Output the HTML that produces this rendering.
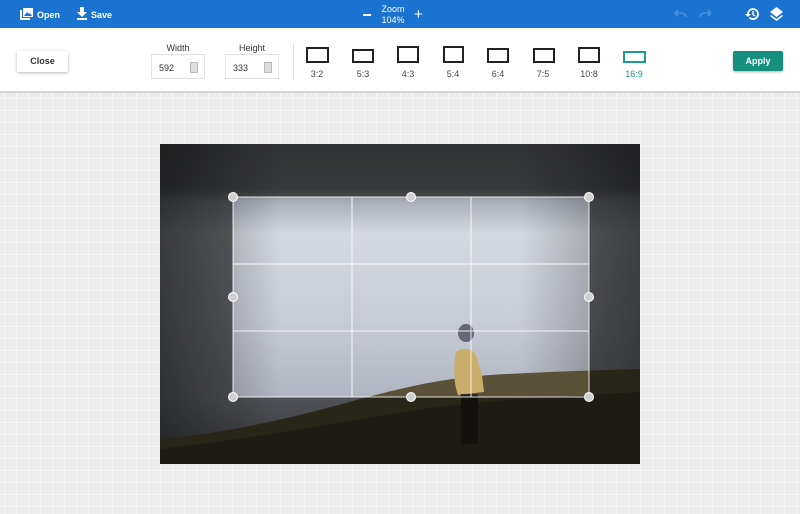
<!DOCTYPE html>
<html><head><meta charset="utf-8"><style>
*{margin:0;padding:0;box-sizing:border-box}
body{width:800px;height:514px;overflow:hidden;font-family:"Liberation Sans",sans-serif;position:relative;
background-color:#ececec;
background-image:linear-gradient(#f6f6f6 1px,transparent 1px),linear-gradient(90deg,#f6f6f6 1px,transparent 1px);
background-size:12px 12px;background-position:4px 2px}
.hdr{position:absolute;left:0;top:0;width:800px;height:28px;background:#1a73d0;color:#fff;font-size:9px;font-weight:bold}
.tb{position:absolute;left:0;top:28px;width:800px;height:65px;background:#fff;border-bottom:2px solid #d4d4d4}
.abs{position:absolute}
.btn{position:absolute;font-size:9px;font-weight:bold;text-align:center;border-radius:2px}
.lbl{font-size:9px;color:#333;text-align:center}
.inp{position:absolute;width:54px;height:25px;border:1px solid #e2e2e2;font-size:9px;color:#333;padding:8px 0 0 7px}
.spin{position:absolute;right:6px;top:7px;width:8px;height:11px;background:#ddd;border:1px solid #bbb}
.r{position:absolute;border:2px solid #222}
.rl{position:absolute;font-size:9px;color:#444;width:40px;text-align:center;top:41px}
</style></head><body>
<div class="hdr">
 <svg class="abs" style="left:20px;top:8px" width="13" height="12" viewBox="0 0 13 12"><rect x="0" y="2" width="2" height="10" fill="#fff"/><rect x="0" y="10" width="10" height="2" fill="#fff"/><rect x="3" y="0" width="10" height="9" fill="#fff"/><path d="M4 8l3-4 2 2 1-1 2 3z" fill="#1a73d0"/></svg>
 <div class="abs" style="left:37px;top:10px">Open</div>
 <svg class="abs" style="left:77px;top:7px" width="10" height="13" viewBox="0 0 10 13"><path d="M3 0h4v5h3L5 10 0 5h3z M0 11h10v2H0z" fill="#fff"/></svg>
 <div class="abs" style="left:91px;top:10px">Save</div>
 <div class="abs" style="left:363px;top:14px;width:8px;height:1.5px;background:#fff"></div>
 <div class="abs" style="left:375px;top:4px;width:36px;text-align:center;font-weight:normal;line-height:11px">Zoom<br>104%</div>
 <div class="abs" style="left:414px;top:9px;font-size:15px;font-weight:normal;line-height:12px">+</div>
 <svg class="abs" style="left:673px;top:9px" width="40" height="10" viewBox="0 0 40 10"><path d="M2 4l3-3M2 4l3 3M2 4h6c3 0 5 2 5 4" stroke="#4b8fdc" stroke-width="1.6" fill="none"/><path d="M38 4l-3-3M38 4l-3 3M38 4h-6c-3 0-5 2-5 4" stroke="#4b8fdc" stroke-width="1.6" fill="none"/></svg>
 <svg class="abs" style="left:745px;top:7px" width="14" height="14" viewBox="0 0 14 14"><path d="M3 7a5 5 0 1 1 1.5 3.6" stroke="#fff" stroke-width="1.8" fill="none"/><path d="M0 7h6L3 10z" fill="#fff"/><path d="M8 4v3.5l2 1.5" stroke="#fff" stroke-width="1.4" fill="none"/></svg>
 <svg class="abs" style="left:770px;top:7px" width="13" height="14" viewBox="0 0 13 14"><path d="M6.5 0L13 5 6.5 10 0 5z" fill="#fff"/><path d="M1 8l5.5 4L12 8l1 1-6.5 5L0 9z" fill="#fff"/></svg>
</div>
<div class="tb">
 <div class="btn" style="left:17px;top:23px;width:51px;height:21px;line-height:21px;color:#333;background:#fff;box-shadow:0 1px 3px rgba(0,0,0,.3)">Close</div>
 <div class="abs lbl" style="left:151px;top:15px;width:54px">Width</div>
 <div class="inp" style="left:151px;top:26px">592<div class="spin"></div></div>
 <div class="abs lbl" style="left:225px;top:15px;width:54px">Height</div>
 <div class="inp" style="left:225px;top:26px">333<div class="spin"></div></div>
 <div class="abs" style="left:293px;top:15px;width:1px;height:37px;background:#e2e2e2"></div>
 <div class="r" style="left:306px;top:19px;width:23px;height:16px"></div><div class="rl" style="left:297px">3:2</div>
 <div class="r" style="left:352px;top:21px;width:22px;height:14px"></div><div class="rl" style="left:343px">5:3</div>
 <div class="r" style="left:397px;top:18px;width:22px;height:17px"></div><div class="rl" style="left:388px">4:3</div>
 <div class="r" style="left:443px;top:18px;width:21px;height:17px"></div><div class="rl" style="left:433px">5:4</div>
 <div class="r" style="left:487px;top:20px;width:22px;height:15px"></div><div class="rl" style="left:478px">6:4</div>
 <div class="r" style="left:533px;top:20px;width:22px;height:15px"></div><div class="rl" style="left:523px">7:5</div>
 <div class="r" style="left:578px;top:19px;width:22px;height:16px"></div><div class="rl" style="left:569px">10:8</div>
 <div class="r" style="left:623px;top:23px;width:23px;height:12px;border-color:#1c9c8c"></div><div class="rl" style="left:614px;color:#1c9c8c">16:9</div>
 <div class="btn" style="left:733px;top:23px;width:50px;height:20px;line-height:20px;color:#fff;background:#16907e;box-shadow:0 1px 2px rgba(0,0,0,.3)">Apply</div>
</div>
<svg class="abs" style="left:160px;top:144px" width="480" height="320" viewBox="0 0 480 320">
<defs>
<linearGradient id="sky" x1="0" y1="0" x2="0" y2="1"><stop offset="0" stop-color="#707276"/><stop offset=".14" stop-color="#7c7f84"/><stop offset=".18" stop-color="#a9aeb8"/><stop offset=".28" stop-color="#d4d8e0"/><stop offset=".55" stop-color="#c8ccd6"/><stop offset=".8" stop-color="#b0b4c0"/><stop offset="1" stop-color="#7a7c80"/></linearGradient>
<linearGradient id="side" x1="0" y1="0" x2="1" y2="0"><stop offset="0" stop-color="#000" stop-opacity=".4"/><stop offset=".25" stop-color="#000" stop-opacity="0"/><stop offset=".75" stop-color="#000" stop-opacity="0"/><stop offset="1" stop-color="#000" stop-opacity=".35"/></linearGradient>
</defs>
<rect width="480" height="320" fill="url(#sky)"/>
<rect width="480" height="320" fill="url(#side)"/>
<path d="M0 320V295C60 290 130 275 200 255C250 242 280 235 330 231C380 228 440 226 480 225V320z" fill="#5a5238"/>
<path d="M0 320V305C80 296 160 282 230 270C300 258 400 252 480 248V320z" fill="#423c2a"/>
<ellipse cx="306" cy="189" rx="8" ry="9" fill="#667"/>
<path d="M296 208c6-5 16-4 20 3l6 20 2 17-26 3c-4-10-5-28-2-43z" fill="#c9ad6a"/>
<rect x="301" y="250" width="17" height="50" fill="#2a2620"/>
<path d="M0 0H480V320H0z M73 53V253H429V53z" fill="rgba(0,0,0,.55)" fill-rule="evenodd"/>
<g stroke="rgba(255,255,255,.7)" stroke-width="1.2" fill="none"><rect x="73" y="53" width="356" height="200"/><path d="M192 53V253M311 53V253M73 120H429M73 187H429"/></g>
<g fill="#d0d0d0" stroke="#fff" stroke-width="1"><circle cx="73" cy="53" r="4.5"/><circle cx="251" cy="53" r="4.5"/><circle cx="429" cy="53" r="4.5"/><circle cx="73" cy="153" r="4.5"/><circle cx="429" cy="153" r="4.5"/><circle cx="73" cy="253" r="4.5"/><circle cx="251" cy="253" r="4.5"/><circle cx="429" cy="253" r="4.5"/></g>
</svg>
</body></html>
